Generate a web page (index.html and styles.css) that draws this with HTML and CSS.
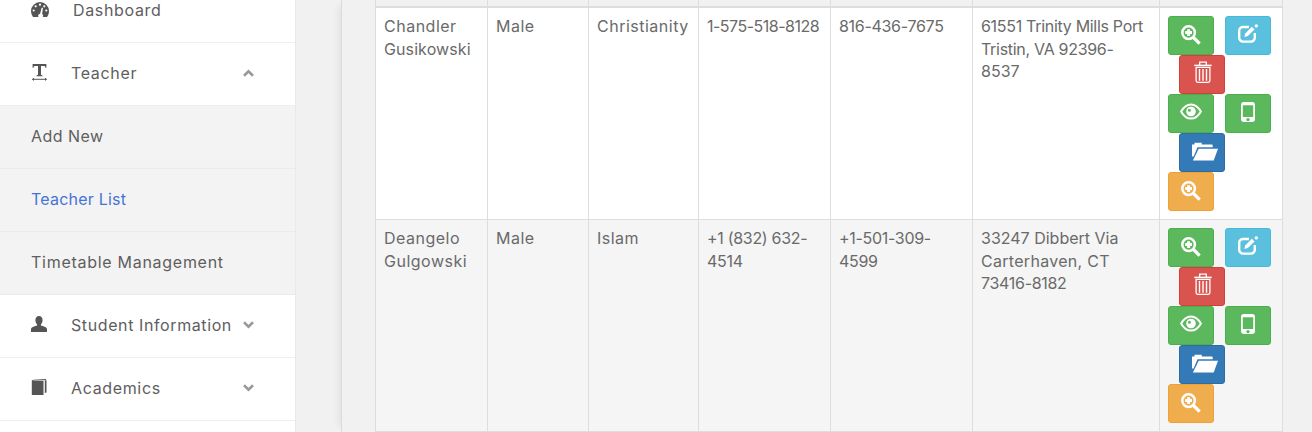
FILE: index.html
```html
<!DOCTYPE html>
<html lang="en">
<head>
<meta charset="utf-8">
<title>Teacher List</title>
<link rel="stylesheet" href="styles.css">
</head>
<body>
<svg class="defs" width="0" height="0" aria-hidden="true">
  <symbol id="i-zoom" viewBox="0 0 20 20"><circle cx="7.600" cy="7.600" r="6.300" fill="none" stroke="currentColor" stroke-width="2.500"/><path d="M12 12l6.600 6.600" stroke="currentColor" stroke-width="3.200" fill="none"/><path d="M7.600 4.200v6.800M4.200 7.600h6.800" stroke="currentColor" stroke-width="3" fill="none"/></symbol>
  <symbol id="i-edit" viewBox="0 0 21 19"><path d="M11 3H5A3.800 3.800 0 0 0 1.200 6.800v6.900A3.800 3.800 0 0 0 5 17.600h8a3.800 3.800 0 0 0 3.800-3.900V9" fill="none" stroke="currentColor" stroke-width="2.400"/><path d="M6.300 13l.9-3.500 6.700-6.700 2.600 2.600-6.700 6.700z" fill="currentColor"/><circle cx="18.300" cy="1.900" r="1.700" fill="currentColor"/></symbol>
  <symbol id="i-trash" viewBox="0 0 18 22"><path d="M.3 4.400h17.400" stroke="currentColor" stroke-width="1.500" fill="none"/><path d="M5.700 4V1.200h6.600V4" stroke="currentColor" stroke-width="1.300" fill="none"/><path d="M2.100 6.400h13.800v13.200a1.700 1.700 0 0 1-1.700 1.700H3.800a1.700 1.700 0 0 1-1.700-1.700z" stroke="currentColor" stroke-width="1.300" fill="none"/><path d="M5.500 8v11.800M9 8v11.800M12.500 8v11.800" stroke="currentColor" stroke-width="1.400" fill="none"/></symbol>
  <symbol id="i-eye" viewBox="0 0 22 17"><path d="M1.100 8.500C3.700 3.800 7 1.400 11 1.400s7.300 2.400 9.900 7.100c-2.600 4.700-5.900 7.100-9.900 7.100S3.700 13.200 1.100 8.500z" fill="none" stroke="currentColor" stroke-width="2"/><path fill-rule="evenodd" d="M11 3.700a4.800 4.800 0 1 1 0 9.600 4.800 4.800 0 0 1 0-9.600zM9.400 5.800a1.500 1.500 0 1 0 0 3 1.500 1.500 0 0 0 0-3z" fill="currentColor"/></symbol>
  <symbol id="i-phone" viewBox="0 0 14 20"><path fill-rule="evenodd" d="M3 0h8a3 3 0 0 1 3 3v14a3 3 0 0 1-3 3H3a3 3 0 0 1-3-3V3a3 3 0 0 1 3-3zM1.800 3.200v11.900h10.400V3.200zM7 15.900a1.700 1.700 0 1 0 0 3.400 1.700 1.700 0 0 0 0-3.400z" fill="currentColor"/></symbol>
  <symbol id="i-folder" viewBox="0 0 26 19"><path d="M0 2.400h2.500V.8h7.200v1.600h10a1 1 0 0 1 1 1v1.900H5.500L1.600 14.600H0z" fill="currentColor"/><path d="M6.700 6.700H26l-4.300 11.800H.9z" fill="currentColor"/></symbol>
  <symbol id="i-gauge" viewBox="0 0 18 15"><path fill-rule="evenodd" d="M9 0a9 9 0 0 1 9 9c0 2.300-.7 4.400-2 6h-4.400c.9-1 .7-2.300-.5-3l.9-6.200h-1.400l-1.500 5.900c-1.500.1-2.700 2-1.400 3.300H2A9.800 9.800 0 0 1 0 9a9 9 0 0 1 9-9zM9 1.600a1.100 1.100 0 1 0 0 2.200 1.100 1.100 0 0 0 0-2.200zM4.700 3.200a1.100 1.100 0 1 0 0 2.200 1.100 1.100 0 0 0 0-2.200zM2.700 7.400a1.100 1.100 0 1 0 0 2.200 1.100 1.100 0 0 0 0-2.200zM15.300 7.400a1.100 1.100 0 1 0 0 2.200 1.100 1.100 0 0 0 0-2.200zM13.300 3.200a1.100 1.100 0 1 0 0 2.200 1.100 1.100 0 0 0 0-2.200z" fill="currentColor"/></symbol>
  <symbol id="i-text" viewBox="0 0 15 17"><path d="M.6 0h13.800v3.800h-.9c-.3-1.100-.7-1.700-1.600-1.700H9v8.700l1.500.6v.8H4.500v-.8l1.500-.6V2.100H3.100c-.9 0-1.300.6-1.600 1.700H.6z" fill="currentColor"/><path d="M.3 15.300h14.400" stroke="currentColor" stroke-width="1"/><path d="M2 13.700L.1 15.300 2 17zM13 13.700l1.900 1.600L13 17z" fill="currentColor"/></symbol>
  <symbol id="i-user" viewBox="0 0 16 16"><path d="M8 0c2.300 0 3.600 1.700 3.600 4 0 1.700-.7 3.400-1.700 4.400v1.100c2.200.6 6.100 1.800 6.100 3.600V16H0v-2.900c0-1.800 3.900-3 6.100-3.600V8.400C5.100 7.400 4.400 5.700 4.400 4 4.400 1.700 5.700 0 8 0z" fill="currentColor"/></symbol>
  <symbol id="i-book" viewBox="0 0 15 16"><path d="M2 .7L14.500 0v.9L2.700 1.600z" fill="currentColor"/><path d="M.3 1.400l1.500-.6.6 1h9.600V16H.3z" fill="currentColor"/><path d="M13.300 1.300H15V13.600l-1.700.3z" fill="currentColor"/></symbol>
  <symbol id="i-chev" viewBox="0 0 11 8"><path d="M1 1.300l4.500 4.400L10 1.300" fill="none" stroke="currentColor" stroke-width="2.600"/></symbol>
</svg>
<div class="app">
  <nav class="sidebar">
    <a class="item"><svg class="nav-ico ico-gauge"><use href="#i-gauge"/></svg><span class="label">Dashboard</span></a>
    <a class="item"><svg class="nav-ico ico-text"><use href="#i-text"/></svg><span class="label">Teacher</span><svg class="chev chev-up"><use href="#i-chev"/></svg></a>
    <a class="sub sub-add">Add New</a>
    <a class="sub sub-active">Teacher List</a>
    <a class="sub">Timetable Management</a>
    <a class="item"><svg class="nav-ico"><use href="#i-user"/></svg><span class="label label-tight">Student Information</span><svg class="chev"><use href="#i-chev"/></svg></a>
    <a class="item"><svg class="nav-ico"><use href="#i-book"/></svg><span class="label">Academics</span><svg class="chev"><use href="#i-chev"/></svg></a>
    <div class="item item-last"></div>
  </nav>
  <main class="content">
    <section class="panel">
      <table class="grid">
        <colgroup><col class="c1"><col class="c2"><col class="c3"><col class="c4"><col class="c5"><col class="c6"><col class="c7"></colgroup>
        <thead><tr><th></th><th></th><th></th><th></th><th></th><th></th><th></th></tr></thead>
        <tbody>
          <tr>
            <td class="t-word">Chandler <span class="t-less">Gusikowski</span></td><td class="t-word">Male</td><td class="t-word">Christianity</td><td class="t-tight">1-575-518-8128</td><td class="t-num">816-436-7675</td><td><span class="t-num">61551 Trinity Mills Port</span><br><span class="t-num">Tristin, VA 92396-</span><br>8537</td>
            <td><div class="actions">
              <a class="btn green"><svg class="bi bi-zoom"><use href="#i-zoom"/></svg></a>
              <a class="btn cyan"><svg class="bi bi-edit"><use href="#i-edit"/></svg></a>
              <a class="btn red inset"><svg class="bi bi-trash"><use href="#i-trash"/></svg></a>
              <a class="btn green"><svg class="bi bi-eye"><use href="#i-eye"/></svg></a>
              <a class="btn green"><svg class="bi bi-phone"><use href="#i-phone"/></svg></a>
              <a class="btn blue inset"><svg class="bi bi-folder"><use href="#i-folder"/></svg></a>
              <a class="btn orange"><svg class="bi bi-zoom"><use href="#i-zoom"/></svg></a>
            </div></td>
          </tr>
          <tr class="alt">
            <td class="t-word">Deangelo Gulgowski</td><td class="t-word">Male</td><td class="t-word">Islam</td><td class="t-num">+1 (832) 632-4514</td><td class="t-num">+1-501-309-4599</td><td>33247 Dibbert Via<br><span class="t-wide">Carterhaven, CT</span><br><span class="t-num">73416-8182</span></td>
            <td><div class="actions">
              <a class="btn green"><svg class="bi bi-zoom"><use href="#i-zoom"/></svg></a>
              <a class="btn cyan"><svg class="bi bi-edit"><use href="#i-edit"/></svg></a>
              <a class="btn red inset"><svg class="bi bi-trash"><use href="#i-trash"/></svg></a>
              <a class="btn green"><svg class="bi bi-eye"><use href="#i-eye"/></svg></a>
              <a class="btn green"><svg class="bi bi-phone"><use href="#i-phone"/></svg></a>
              <a class="btn blue inset"><svg class="bi bi-folder"><use href="#i-folder"/></svg></a>
              <a class="btn orange"><svg class="bi bi-zoom"><use href="#i-zoom"/></svg></a>
            </div></td>
          </tr>
        </tbody>
      </table>
    </section>
  </main>
</div>
</body>
</html>
```
FILE: styles.css
```css
* { box-sizing: border-box; }
html, body { margin: 0; height: 100%; overflow: hidden; }
body {
  background: #f1f1f1;
  color: #666;
  font-family: "Inter", "Open Sans", "Liberation Sans", sans-serif;
  font-size: 16px;
}
.defs { display: block; height: 0; }
.app { display: flex; height: 432px; overflow: hidden; align-items: flex-start; }
.sidebar {
  width: 296px;
  flex: none;
  background: #fff;
  border-right: 1px solid #e9e9e9;
  min-height: 500px;
  margin-top: -20px;
}
.item {
  display: flex;
  align-items: center;
  height: 63px;
  padding: 0 41px 2px 31px;
  border-bottom: 1px solid #eee;
  color: #5e5e5e;
}
.item-last { border-bottom: 0; }
.nav-ico { width: 16px; height: 16px; margin-right: 24px; flex: none; color: #555; position: relative; top: -1px; }
.ico-gauge { width: 18px; height: 15px; }
.ico-text { width: 15px; height: 17px; margin-left: 1px; margin-right: 24px; }
.label { flex: 1; letter-spacing: .65px; white-space: nowrap; }
.label-tight { letter-spacing: .6px; }
.chev { width: 11px; height: 8px; color: #999; flex: none; }
.chev-up { transform: scaleY(-1); }
.sub {
  display: block;
  height: 63px;
  line-height: 61px;
  padding-left: 31px;
  background: #f3f3f3;
  border-bottom: 1px solid #ebebeb;
  color: #5e5e5e;
  letter-spacing: .72px;
}
.sub-add { letter-spacing: .45px; }
.sub-active { color: #4673d8; letter-spacing: .22px; }
.content { flex: 1; min-width: 0; padding: 0 30px 0 45px; }
.panel {
  display: flow-root;
  background: #f1f1f1;
  border-left: 1px solid #dcdcdc;
  box-shadow: -7px 0 8px -6px rgba(0, 0, 0, .09);
  padding-left: 33px;
  height: 432px;
}
.grid {
  width: 907px;
  table-layout: fixed;
  border-collapse: collapse;
  margin-top: -32px;
  background: #fff;
}
.c1 { width: 112px; } .c2 { width: 101px; } .c3 { width: 110px; } .c4 { width: 132px; }
.c5 { width: 142px; } .c6 { width: 187px; } .c7 { width: 123px; }
th {
  height: 38px;
  background: #f1f1f1;
  border: 1px solid #ddd;
  border-bottom: 2px solid #ddd;
}
td {
  border: 1px solid #ddd;
  padding: 7.5px 8px 8px;
  vertical-align: top;
  line-height: 22.5px;
  color: #6a6a6a;
  font-size: 16px;
}
.t-word { letter-spacing: .5px; }
.t-less { letter-spacing: .1px; }
.t-num { letter-spacing: -.3px; }
.t-wide { letter-spacing: .3px; }
.t-tight { letter-spacing: -.5px; white-space: nowrap; }
.alt td { background: #f5f5f5; }
.actions { display: flex; flex-wrap: wrap; column-gap: 11px; width: 103px; margin-top: .5px; }
.btn {
  width: 46px;
  height: 39px;
  display: flex;
  align-items: center;
  justify-content: center;
  border-radius: 3px;
  border: 1px solid transparent;
  color: #fff;
}
.inset { margin-left: 11px; }
.green { background: #5cb85c; border-color: #4cae4c; }
.cyan { background: #5bc0de; border-color: #46b8da; }
.red { background: #d9534f; border-color: #d43f3a; }
.blue { background: #337ab7; border-color: #2e6da4; }
.orange { background: #f0ad4e; border-color: #eea236; }
.bi { flex: none; }
.bi-zoom { width: 20px; height: 20px; margin-bottom: 1px; }
.bi-edit { width: 21px; height: 19px; margin-bottom: 3px; }
.bi-trash { width: 18px; height: 22px; margin: 0 0 5px 2px; }
.bi-eye { width: 22px; height: 17px; margin-bottom: 4px; }
.bi-phone { width: 14px; height: 20px; margin-bottom: 3px; }
.bi-folder { width: 26px; height: 19px; margin: 0 0 2px 6px; }
```
